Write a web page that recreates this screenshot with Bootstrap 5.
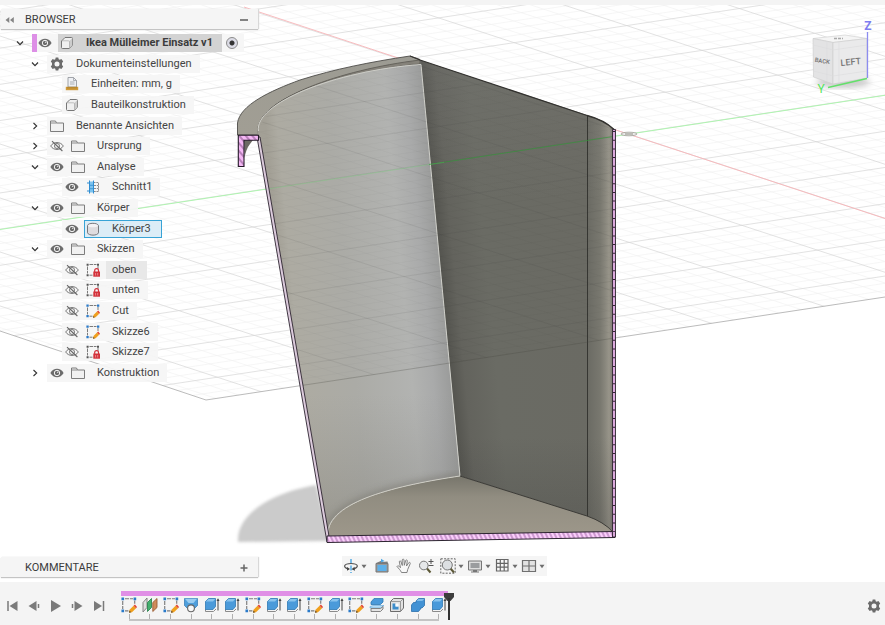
<!DOCTYPE html>
<html lang="de">
<head>
<meta charset="utf-8">
<meta name="viewport" content="width=device-width, initial-scale=1">
<title>Ikea Mülleimer Einsatz v1</title>
<link href="https://cdn.jsdelivr.net/npm/bootstrap@5.3.0/dist/css/bootstrap.min.css" rel="stylesheet">
<style>
  body { font-family: Roboto, "Noto Sans", sans-serif; font-size: 11px; line-height: 16px; color: #444; background: #fff; }
  button { border: 0; padding: 0; background: none; color: #6b6b6b; line-height: 1; }
  svg { display: block; flex: none; }
  .top-strip { height: 5px; background: #f4f4f4; flex: none; }
  .workspace { display: grid; grid-template: minmax(0, 1fr) / minmax(0, 1fr); min-height: 0; }
  .workspace > * { grid-area: 1 / 1; }
  .overlay { padding: 4px 1px 5px; z-index: 1; pointer-events: none; }
  .overlay > * { pointer-events: auto; }
  .dock { width: 257px; height: 20px; background: #f5f5f5; box-shadow: 0 1px 1px #c4c4c4, 1px 0 1px #ddd; padding: 1px 8px 0 3px; }
  .dock h2 { font-size: 11px; line-height: 16px; font-weight: 400; margin: 0; flex: 1; padding-left: 9px; color: #3c3c3c; }
  .i10 { width: 12px; height: 12px; }
  .i14 { width: 14px; height: 14px; }
  .i16 { width: 16px; height: 16px; }
  .caret { width: 8px; height: 16px; }

  .tree { height: 350px; width: 257px; margin: 4px 0 0; padding: 0; list-style: none; display: grid; grid-auto-rows: 1fr; }
  .tree li { display: flex; align-items: center; }
  .lvl0 { padding-left: 11px; }
  .lvl1 { padding-left: 26px; }
  .lvl2 { padding-left: 61px; }
  .twist { width: 16px; margin-right: 4px; display: flex; justify-content: center; color: #333; }
  .chip { display: flex; align-items: center; height: 18px; padding: 0 8px 0 3px; background: rgba(245, 245, 245, .93); white-space: nowrap; }
  .chip > svg { color: #6b6b6b; }
  .chip .name { padding-left: 12px; }
  .chip button + svg { margin-left: 7px; }
  .root-chip { padding: 0 6px 0 0; border-left: 5px solid #dd8fe6; }
  .root-chip button { margin: 0 6px 0 1px; }
  .root-name { display: flex; align-items: center; height: 18px; padding: 0 9px 0 2px; background: #d3d3d3; font-weight: 700; color: #3c3c3c; }
  .root-chip input { appearance: none; width: 12px; height: 12px; margin: 0 0 0 4px; border: 1px solid #8b8b8b; border-radius: 50%; background: radial-gradient(circle, #333 0 2px, #dcdce6 3px); }
  .picked { display: flex; align-items: center; height: 18px; margin: 0 -8px 0 5px; padding: 0 10px 0 1px; background: #dcedf7; border: 1px solid #38a3d6; }
  .chip .hovered { background: #e8e8e8; margin: 0 -8px 0 6px; padding: 1px 11px 1px 6px; }

  .foot { display: grid; grid-template-columns: 1fr auto 1fr; align-items: end; }
  .viewbar { background: #f5f5f5; height: 20px; gap: 6px; padding: 0 1px; margin: 0 0 1px 4px; }
  .viewbar .tight { gap: 2px; }
  .viewbar .split { display: flex; gap: 1px; }

  .timeline { background: #f4f4f4; height: 43px; padding: 0 4px; flex: none; }
  .transport { gap: 6px; padding-top: 5px; }
  .track { width: 330px; margin-left: 11px; padding-top: 9px; position: relative; }
  .group-bar { height: 5px; margin: 0 1px 0 2px; background: #e08fe6; }
  .steps { display: grid; grid-template-columns: repeat(16, 1fr); }
  .steps button { display: flex; flex-direction: column; align-items: center; padding-top: 1px; }
  .steps button::after { content: ""; width: 1px; height: 5px; margin-top: 1px; background: #b0b0b0; }
  .axis { height: 2px; margin: 0 10px; background: #c4c4c4; }
  .playhead { position: absolute; right: -6px; top: 10px; width: 12px; height: 28px; }
  .settings { padding-top: 5px; }

  #minor { stroke: var(--minor, #f0f0f0); }
  #major { stroke: var(--major, #d6d6d6); }
  .through { --minor: rgba(60, 60, 60, .035); --major: rgba(50, 50, 50, .13); }
</style>
</head>
<body class="d-flex flex-column vh-100 overflow-hidden">

<svg width="0" height="0" class="position-absolute" aria-hidden="true">
  <defs>
    <symbol id="down" viewBox="0 0 12 12"><path d="M3 4.500 6 7.700 9 4.500" fill="none" stroke="currentColor" stroke-width="1.200"/></symbol>
    <symbol id="right" viewBox="0 0 12 12"><path d="M4.500 3 7.700 6 4.500 9" fill="none" stroke="currentColor" stroke-width="1.100"/></symbol>
    <symbol id="eye" viewBox="0 0 14 14"><path d="M.4 7C3.400 1.400 10.600 1.400 13.600 7 10.600 12.600 3.400 12.600 .4 7z" fill="#6c6c6c"/><circle cx="7" cy="7" r="2.700" fill="none" stroke="#f4f4f4" stroke-width="1"/><circle cx="7.700" cy="6.200" r=".8" fill="#ddd"/></symbol>
    <symbol id="eyeoff" viewBox="0 0 14 14"><path d="M.7 7C3.400 2.400 10.600 2.400 13.300 7 10.600 11.600 3.400 11.600 .7 7z" fill="none" stroke="#777"/><circle cx="7" cy="7" r="2.500" fill="none" stroke="#777"/><path d="M2 2.200 12.400 12" stroke="#666" stroke-width="1.100"/></symbol>
    <symbol id="folder" viewBox="0 0 14 14"><path d="M.5 2H5.500L6.500 4H13.500V12.500H.5z" fill="#f1f1f1" stroke="#7d7d7d"/><path d="M1 4H6.500" stroke="#8b8b8b"/></symbol>
    <symbol id="gear" viewBox="0 0 14 14"><path fill="currentColor" fill-rule="evenodd" d="M5.700.5H8.300L8.700 2.300 9.700 2.800 11.400 2 13.200 4.400 12 5.900V8.100L13.200 9.600 11.400 12 9.700 11.200 8.700 11.700 8.300 13.500H5.700L5.300 11.700 4.300 11.200 2.600 12 .8 9.600 2 8.100V5.900L.8 4.400 2.600 2 4.300 2.800 5.300 2.300zM7 4.500A2.500 2.500 0 1 0 7 9.500 2.500 2.500 0 1 0 7 4.500z"/></symbol>
    <symbol id="cube" viewBox="0 0 14 14"><path d="M1.500 5 5 1.500H11.500Q12.500 1.500 12.500 2.500V9L9.300 12.500H2.500Q1.500 12.500 1.500 11.500z" fill="#f0f0f0" stroke="#777" stroke-linejoin="round"/><path d="M9.300 5 12.300 2V9L9.300 12.300z" fill="#ccc"/><path d="M2 4.800H8.500Q9.500 4.800 9.500 5.800V12" fill="none" stroke="#aaa" stroke-width=".7"/></symbol>
    <symbol id="units" viewBox="0 0 14 14"><path d="M3 .5H8.500L11.500 3.500V10H3z" fill="#eef0f4" stroke="#8b8f96" stroke-width=".8"/><path d="M8.500 .5V3.500H11.500M5 5H9.500M5 7H9.500" fill="none" stroke="#9a9ea6" stroke-width=".8"/><path d="M.8 9.800H13.200V13.200H.8z" fill="#cf9a3b"/><path d="M3 10V11.500M5 10V11.500M7 10V11.500M9 10V11.500M11 10V11.500" stroke="#8a6218" stroke-width=".6"/></symbol>
    <symbol id="section" viewBox="0 0 14 14"><path d="M7.500 2.500H12.500V11.500H7.500M8 5.500H12.500M8 8.500H12.500" fill="none" stroke="#8d8d8d" stroke-dasharray="2 .8"/><path d="M3.500 1.500H7.500V12.500H3.500z" fill="#7cc3ef"/><path d="M1 3H3.500M1 11H3.500M3.500 .5V13.500M7.500 .5V13.500" stroke="#2f8dd2"/><path d="M4 5.300H7M4 8.700H7" stroke="#2f8dd2" stroke-width=".8"/></symbol>
    <symbol id="body" viewBox="0 0 14 14"><path d="M1.500 3.500C2 .6 11.500.6 12.500 3.500V10.800C11.500 13.900 2.500 13.900 1.500 10.800z" fill="#dedcdf" stroke="#77777c"/><path d="M2 3.700C3 5.800 11 5.800 12 3.700 11 1.300 3 1.300 2 3.700z" fill="#f4f2f4"/></symbol>
    <symbol id="frame" viewBox="0 0 14 14"><path d="M3.500 1.500H10.500M12 3V6M1.500 3.500V10.500M3.500 12.200H6.500" fill="none" stroke="#7b7b7b" stroke-dasharray="3.500 .8"/></symbol>
    <symbol id="sklock" viewBox="0 0 14 14"><use href="#frame"/><path d="M.6.700H2.600V2.700H.6zM11 .7H13V2.700H11zM.6 11.200H2.600V13.200H.6z" fill="#555"/><path d="M8.700 9V7.500A1.900 1.900 0 0 1 12.500 7.500V9" fill="none" stroke="#d3323b" stroke-width="1.200"/><path d="M7.300 8.500H14V13.700H7.300z" fill="#d3323b"/><path d="M9.600 10V12.500M11.700 10V12.500" stroke="#f1a8ab" stroke-width=".7"/></symbol>
    <symbol id="skedit" viewBox="0 0 14 14"><use href="#frame"/><path d="M.4.500H2.700V2.800H.4zM11 .5H13.300V2.800H11zM.4 11H2.700V13.300H.4z" fill="#2a7ac9"/><path d="M7 13.700 7.500 11.100 11 7.600 13.200 9.800 9.600 13.300z" fill="#f0a01e"/><path d="M11 7.600 12.200 6.500 14 8.700 13.200 9.800z" fill="#e2422f"/><path d="M7 13.700 7.400 11.900 8.900 13.300z" fill="#5d4a2e"/></symbol>
    <symbol id="planes" viewBox="0 0 16 16"><path d="M1 5.500 5 1V10.500L1 15z" fill="#e0e0e0" stroke="#7c7c7c" stroke-width=".9"/><path d="M5.500 5.500 9.500 1.500V10.500L5.500 14.500z" fill="#45b06f" stroke="#2f8552" stroke-width=".9"/><path d="M10.800 5.500 15 1.500V10.500L10.800 14.500z" fill="#cf8b5b" stroke="#9b5f35" stroke-width=".9"/></symbol>
    <symbol id="loft" viewBox="0 0 16 16"><path d="M1.500 1.500 14.500 1.500V8.500L11 12H5L1.500 8.500z" fill="#4f9fdc" stroke="#2e77b3" stroke-width=".7"/><path d="M2 1.800 5.500 6H10.500L14 1.800z" fill="#9bcdf1"/><circle cx="8" cy="11.300" r="3.400" fill="#f8f8f8" stroke="#666" stroke-width="1.100"/></symbol>
    <symbol id="extrude" viewBox="0 0 16 16"><path d="M1.500 12V14.500H9.500L12 12" fill="none" stroke="#8b8b8b"/><path d="M1.500 4.500 4.500 1.500H11.500V9.500L9 12.500H1.500z" fill="#4a9ada" stroke="#2f78b4" stroke-width=".8"/><path d="M1.800 4.500 4.500 1.900H11.200L9 4.500z" fill="#8ac4ee"/><path d="M14 2.500V13.500" stroke="#444"/><path d="M12.500 4 14 1.200 15.500 4z" fill="#444"/></symbol>
    <symbol id="splitb" viewBox="0 0 16 16"><path d="M2 5 5 1.500H14V5L11.500 7.500H2z" fill="#4a9ada" stroke="#2f78b4" stroke-width=".8"/><path d="M1 9.500 4 8.500H15L12 11H1z" fill="#b7ddf6" stroke="#5fa5d8" stroke-width=".6"/><path d="M2 11.500H11.500L14 9.500V12L11.500 14.500H2z" fill="#e4e4e4" stroke="#777" stroke-width=".9"/></symbol>
    <symbol id="shell" viewBox="0 0 16 16"><path d="M1.500 4.500 4.500 1.500H14.500V11L11.500 14.500H1.500z" fill="#e2e2e2" stroke="#6c6c6c"/><path d="M1.500 4.500H11.500V14.500M11.500 4.500 14.500 1.500" fill="none" stroke="#888" stroke-width=".8"/><path d="M3.500 6.500H6.500V9.500H9.500V12.500H3.500z" fill="#3d8dcb"/><path d="M6.500 6.500H9.500V9.500H6.500z" fill="#f6fbff"/></symbol>
    <symbol id="combine" viewBox="0 0 16 16"><path d="M1.500 8 3.500 5.500H6V4L8.500 1.500H14.500V8.500L12 11H10.500V12L8.500 14.500H1.500z" fill="#4292d4" stroke="#2b70ab" stroke-width=".8"/><path d="M6.300 4 8.500 1.900H14.200L12.300 4z" fill="#7fbdea"/></symbol>
    <symbol id="caret" viewBox="0 0 8 16"><path d="M1.500 6.800H6.500L4 10.300z" fill="#6e6e6e"/></symbol>
  </defs>
</svg>

<div class="top-strip"></div>

<main class="workspace flex-grow-1">
  <svg class="w-100 h-100" viewBox="0 5 885 577" preserveAspectRatio="xMidYMid slice" role="img" aria-label="Schnittansicht des Mülleimer-Einsatzes">
    <defs>
      <linearGradient id="inner" gradientUnits="userSpaceOnUse" x1="282" y1="300" x2="444" y2="285">
        <stop offset="0" stop-color="#a3a096"/><stop offset=".07" stop-color="#adaba2"/><stop offset=".4" stop-color="#ababa6"/><stop offset=".75" stop-color="#b2b3b1"/><stop offset=".88" stop-color="#a9aaaa"/><stop offset="1" stop-color="#999a99"/>
      </linearGradient>
      <linearGradient id="innerShade" x1="0" y1="0" x2="0" y2="1"><stop offset=".7" stop-color="#777" stop-opacity="0"/><stop offset="1" stop-color="#6b6960" stop-opacity=".3"/></linearGradient>
      <linearGradient id="back" gradientUnits="userSpaceOnUse" x1="436" y1="300" x2="613" y2="283">
        <stop offset="0" stop-color="#4c4c47"/><stop offset=".12" stop-color="#63635d"/><stop offset=".3" stop-color="#6a6b64"/><stop offset=".84" stop-color="#6a6a63"/>
      </linearGradient>
      <linearGradient id="bend" gradientUnits="userSpaceOnUse" x1="587" y1="0" x2="613" y2="0">
        <stop offset="0" stop-color="#7c7b72" stop-opacity="0"/><stop offset=".5" stop-color="#7c7b72" stop-opacity=".8"/><stop offset=".85" stop-color="#98958a"/><stop offset="1" stop-color="#7d7a72"/>
      </linearGradient>
      <linearGradient id="backShade" x1="0" y1="0" x2="0" y2="1"><stop offset="0" stop-color="#888" stop-opacity=".16"/><stop offset=".3" stop-color="#888" stop-opacity="0"/><stop offset=".8" stop-color="#333" stop-opacity="0"/><stop offset="1" stop-color="#333" stop-opacity=".22"/></linearGradient>
      <linearGradient id="floor" x1="0" y1="0" x2="0" y2="1"><stop offset="0" stop-color="#77756b"/><stop offset=".35" stop-color="#918d81"/><stop offset="1" stop-color="#9d978a"/></linearGradient>
      <linearGradient id="rim" x1="0" y1="1" x2="1" y2="0"><stop offset="0" stop-color="#a19e94"/><stop offset="1" stop-color="#9c9b93"/></linearGradient>
      <pattern id="hatch" width="4" height="4" patternUnits="userSpaceOnUse" patternTransform="rotate(-25)"><path d="M0 0H4V4H0z" fill="#fbcffb"/><path d="M1 0V4" stroke="#b57cba" stroke-width="1.300"/></pattern>
      <pattern id="hatchHook" width="5" height="5" patternUnits="userSpaceOnUse" patternTransform="rotate(-40)"><path d="M0 0H5V5H0z" fill="#f5b8f5"/><path d="M1 0V5" stroke="#7d4a82" stroke-width="1"/></pattern>
      <filter id="soft"><feGaussianBlur stdDeviation="1.500"/></filter>
      <filter id="soft4"><feGaussianBlur stdDeviation="3"/></filter>
      <clipPath id="plane"><path d="M0 331 206 400 885 297V5H0z"/></clipPath>
      <clipPath id="solid"><path d="M258 135C256 108 330 70 420 60L587 115Q604 120 614 129V538L327 542z"/></clipPath>
      <clipPath id="innerClip"><path d="M258 136C249 105 330 71 421 64L460 476C400 485 326 501 328 536z"/></clipPath>
      <g id="ground" clip-path="url(#plane)" fill="none">
        <g transform="matrix(11.260 -1.706 7.550 2.476 628 134)">
          <path id="minor" stroke-width=".6" vector-effect="non-scaling-stroke"/>
          <path id="major" stroke-width=".7" vector-effect="non-scaling-stroke"/>
        </g>
      </g>
    </defs>

    <!-- ground plane -->
    <use href="#ground"/>
    <path d="M0 331 206 400 885 297" fill="none" stroke="#a9a9a9" stroke-width=".8"/>
    <path d="M0 229.500 885 95.300" stroke="#a8f5a9" stroke-width=".9"/>
    <path d="M244 7 628 134 885 218.500" fill="none" stroke="#f8b4b8" stroke-width=".9"/>
    <ellipse cx="629" cy="134" rx="8" ry="1.800" fill="#eee" stroke="#9c9c92" stroke-width=".8"/>
    <path d="M625 134H633" stroke="#8b8b80"/>

    <!-- cast shadow -->
    <path d="M238 542C236 515 270 493 316 485L330 541z" fill="#cbcbcb" filter="url(#soft)"/>

    <!-- rim -->
    <path d="M237.500 135V123C240 105 270 91 300 80 335 69 370 62 410 56L420 59.500V64C340 71 250 100 258.500 135z" fill="url(#rim)" stroke="#4d4c48" stroke-width=".9"/>
    <path d="M258 128C262 99 338 70 420 60V64C345 71 252 100 258.500 135z" fill="#85827a" stroke="#5a5852" stroke-width=".8"/>

    <!-- back wall -->
    <path d="M420 60 587 115Q604 120 614 129V531L587 517 460 476z" fill="url(#back)"/>
    <path d="M587 115Q604 120 614 129V531L587 517z" fill="url(#bend)"/>
    <path d="M420 60 587 115Q604 120 614 129V531L587 517 460 476z" fill="url(#backShade)"/>
    <path d="M587.500 116V517" stroke="#30302d" stroke-width=".9"/>
    <path d="M410 56 420 60 587 115.500Q604 120 614 129.500" fill="none" stroke="#33322f" stroke-width="1.300"/>

    <!-- inner wall -->
    <path d="M258 136C249 105 330 71 421 64L460 476C400 485 326 501 328 536z" fill="url(#inner)"/>
    <path d="M258 136C249 105 330 71 421 64L460 476C400 485 326 501 328 536z" fill="url(#innerShade)"/>
    <path d="M460 476C400 485 326 501 328 536" fill="none" stroke="#77756d" stroke-width="7" opacity=".5" filter="url(#soft4)" clip-path="url(#innerClip)"/>
    <path d="M258.500 131C254 104 333 71 421 64.500L460 476" fill="none" stroke="#cfcfc9" stroke-width="1"/>

    <!-- floor -->
    <path d="M328 536C326 501 400 485 460 476L587 516Q604 522 613 532z" fill="url(#floor)"/>
    <path d="M460 476 587 516Q604 522 613 532" fill="none" stroke="#3c3b37" stroke-width="1"/>
    <path d="M328 535C326 501 400 485 460 476" fill="none" stroke="#cfcec6" stroke-width="1"/>

    <!-- grid seen through the body -->
    <g clip-path="url(#solid)">
      <use href="#ground" class="through"/>
      <path d="M206 400 885 297" stroke="#44443f" stroke-opacity=".35" stroke-width=".8"/>
      <path d="M0 229.500 444 162.300" stroke="#7fd584" stroke-opacity=".45" stroke-width=".9"/>
      <path d="M429 164.500 885 95.300" stroke="#2f9e35" stroke-opacity=".6" stroke-width="1"/>
    </g>

    <!-- cut faces -->
    <path d="M257 137 327 542H329.500L328.500 533 260 137z" fill="#dccbdc" stroke="#2c2430" stroke-width=".9"/>
    <path d="M327 536 615 531.500V537.500L327 542.500z" fill="url(#hatch)" stroke="#2c2430" stroke-width="1"/>
    <path d="M612.500 129.500H615.500V537H612.500z" fill="#dba9dc" stroke="#2c2430" stroke-width=".9"/>
    <path d="M614 131V532" stroke="#30202f" stroke-width="2" stroke-dasharray="1 7.700"/>
    <path d="M244 140H253L250 144Q246 149 244.500 158z" fill="#6c6a63"/>
    <path d="M238.300 135.300H258.500V140.300H244V166.500H238.300z" fill="url(#hatchHook)" stroke="#251a29" stroke-width="1.100"/>

    <!-- view cube -->
    <ellipse cx="843" cy="82" rx="27" ry="6" fill="#c9c9c9" filter="url(#soft4)"/>
    <path d="M813 38.500 845 35 867 38.500 833 42.500z" fill="#f5f5f5" stroke="#d3d3d3" stroke-width=".7"/>
    <path d="M813 38.500 833 42.500V84L813.500 77z" fill="#e3e3e4" stroke="#d0d0d0" stroke-width=".7"/>
    <path d="M833 42.500 867 38.500V78L833 84z" fill="#eaeaeb" stroke="#d0d0d0" stroke-width=".7"/>
    <path d="M827 41V81M839 42V83M813 45 833 50 867 45M813 71 833 76 867 71" fill="none" stroke="#dcdcdd" stroke-width=".6"/>
    <path d="M834 38.500H843" stroke="#a9a9a9" stroke-width="1.500" stroke-dasharray="3 1"/>
    <path d="M867.500 32V78" stroke="#8c8cf0" stroke-width="1.300"/>
    <path d="M867 78.500 828 87.500" stroke="#63e06a" stroke-width="1.500"/>
    <g font-family="Roboto, sans-serif" text-anchor="middle">
      <text x="868" y="30" font-size="12" font-weight="700" fill="#7d7df0">Z</text>
      <text x="821" y="93" font-size="12" fill="#55e55c">Y</text>
      <text transform="translate(851 65) rotate(-5)" font-size="9" font-weight="500" fill="#777">LEFT</text>
      <text transform="translate(822 63) rotate(9)" font-size="6" font-weight="500" fill="#777">BACK</text>
    </g>
  </svg>

  <div class="overlay d-flex flex-column align-items-stretch">
    <section class="dock d-flex align-items-center">
      <button aria-label="Browser einklappen"><svg class="i10" viewBox="0 0 12 12"><path d="M5.300 3V9L1.500 6zM9.800 3V9L6 6z" fill="#858585"/></svg></button>
      <h2>BROWSER</h2>
      <button aria-label="Minimieren"><svg class="i10" viewBox="0 0 12 12"><path d="M2 6H10" stroke="#666" stroke-width="1.600"/></svg></button>
    </section>

    <ul class="tree">
      <li class="lvl0"><button class="twist m-0" aria-label="Zuklappen"><svg class="i10"><use href="#down"/></svg></button>
        <div class="chip root-chip ms-1"><button aria-label="Sichtbarkeit"><svg class="i14"><use href="#eye"/></svg></button><label for="active" class="root-name"><svg class="i14"><use href="#cube"/></svg><span class="name">Ikea Mülleimer Einsatz v1</span></label><input type="radio" id="active" checked></div></li>
      <li class="lvl1"><button class="twist" aria-label="Zuklappen"><svg class="i10"><use href="#down"/></svg></button>
        <div class="chip"><svg class="i14"><use href="#gear"/></svg><span class="name">Dokumenteinstellungen</span></div></li>
      <li class="lvl2"><div class="chip"><svg class="i14"><use href="#units"/></svg><span class="name">Einheiten: mm, g</span></div></li>
      <li class="lvl2"><div class="chip"><svg class="i14"><use href="#cube"/></svg><span class="name">Bauteilkonstruktion</span></div></li>
      <li class="lvl1"><button class="twist" aria-label="Aufklappen"><svg class="i10"><use href="#right"/></svg></button>
        <div class="chip"><svg class="i14"><use href="#folder"/></svg><span class="name">Benannte Ansichten</span></div></li>
      <li class="lvl1"><button class="twist" aria-label="Aufklappen"><svg class="i10"><use href="#right"/></svg></button>
        <div class="chip"><button aria-label="Sichtbarkeit"><svg class="i14"><use href="#eyeoff"/></svg></button><svg class="i14"><use href="#folder"/></svg><span class="name">Ursprung</span></div></li>
      <li class="lvl1"><button class="twist" aria-label="Zuklappen"><svg class="i10"><use href="#down"/></svg></button>
        <div class="chip"><button aria-label="Sichtbarkeit"><svg class="i14"><use href="#eye"/></svg></button><svg class="i14"><use href="#folder"/></svg><span class="name">Analyse</span></div></li>
      <li class="lvl2"><div class="chip"><button aria-label="Sichtbarkeit"><svg class="i14"><use href="#eye"/></svg></button><svg class="i14"><use href="#section"/></svg><span class="name">Schnitt1</span></div></li>
      <li class="lvl1"><button class="twist" aria-label="Zuklappen"><svg class="i10"><use href="#down"/></svg></button>
        <div class="chip"><button aria-label="Sichtbarkeit"><svg class="i14"><use href="#eye"/></svg></button><svg class="i14"><use href="#folder"/></svg><span class="name">Körper</span></div></li>
      <li class="lvl2"><div class="chip"><button aria-label="Sichtbarkeit"><svg class="i14"><use href="#eye"/></svg></button><div class="picked"><svg class="i14"><use href="#body"/></svg><span class="name">Körper3</span></div></div></li>
      <li class="lvl1"><button class="twist" aria-label="Zuklappen"><svg class="i10"><use href="#down"/></svg></button>
        <div class="chip"><button aria-label="Sichtbarkeit"><svg class="i14"><use href="#eye"/></svg></button><svg class="i14"><use href="#folder"/></svg><span class="name">Skizzen</span></div></li>
      <li class="lvl2"><div class="chip"><button aria-label="Sichtbarkeit"><svg class="i14"><use href="#eyeoff"/></svg></button><svg class="i14"><use href="#sklock"/></svg><span class="name hovered">oben</span></div></li>
      <li class="lvl2"><div class="chip"><button aria-label="Sichtbarkeit"><svg class="i14"><use href="#eyeoff"/></svg></button><svg class="i14"><use href="#sklock"/></svg><span class="name">unten</span></div></li>
      <li class="lvl2"><div class="chip"><button aria-label="Sichtbarkeit"><svg class="i14"><use href="#eyeoff"/></svg></button><svg class="i14"><use href="#skedit"/></svg><span class="name">Cut</span></div></li>
      <li class="lvl2"><div class="chip"><button aria-label="Sichtbarkeit"><svg class="i14"><use href="#eyeoff"/></svg></button><svg class="i14"><use href="#skedit"/></svg><span class="name">Skizze6</span></div></li>
      <li class="lvl2"><div class="chip"><button aria-label="Sichtbarkeit"><svg class="i14"><use href="#eyeoff"/></svg></button><svg class="i14"><use href="#sklock"/></svg><span class="name">Skizze7</span></div></li>
      <li class="lvl1"><button class="twist" aria-label="Aufklappen"><svg class="i10"><use href="#right"/></svg></button>
        <div class="chip"><button aria-label="Sichtbarkeit"><svg class="i14"><use href="#eye"/></svg></button><svg class="i14"><use href="#folder"/></svg><span class="name">Konstruktion</span></div></li>
    </ul>

    <div class="foot mt-auto">
      <section class="dock d-flex align-items-center">
        <span class="i10"></span>
        <h2>KOMMENTARE</h2>
        <button aria-label="Kommentare öffnen"><svg class="i10" viewBox="0 0 12 12"><path d="M2.500 6H9.500M6 2.500V9.500" stroke="#666" stroke-width="1.500"/></svg></button>
      </section>
      <div class="viewbar d-flex align-items-center" role="toolbar" aria-label="Ansicht">
        <div class="split"><button aria-label="Orbit"><svg class="i16" viewBox="0 0 16 16"><path d="M8 1V15" stroke="#49a5e3" stroke-width="1.400" stroke-dasharray="5 1.500"/><path d="M5.500 11C-.5 9.500.5 5.500 8 5.500S16.500 9.500 10 11" fill="none" stroke="#555" stroke-width="1.200"/><path d="M11.500 8.800 8.500 11.200 12 12.800zM4 9 7 11 4 12.800z" fill="#444"/></svg></button><button aria-label="Orbit-Optionen"><svg class="caret"><use href="#caret"/></svg></button></div>
        <button aria-label="Ansehen"><svg class="i16" viewBox="0 0 16 16"><path d="M2 5.500H14V14H2z" fill="#9a9a9a" stroke="#777"/><path d="M3.500 7H12.500V13H3.500z" fill="#5db0e9"/><path d="M2 5 8 2.500V4L13.500 3.500 14 5.500H2z" fill="#7d7d7d"/><path d="M7 2V.8L10.500 3 7 4.500z" fill="#4ba7e6"/></svg></button>
        <button aria-label="Pan"><svg class="i16" viewBox="0 0 16 16"><path d="M5.500 14.500C4.500 12 2.500 10.500 1 8.500 1.500 7.300 3 7.800 4.500 9.700L3.300 3.800C3.400 2.500 4.700 2.500 5 3.800L6.300 7.500 6.200 2C6.500.800 7.800.800 8 2L8.300 7.300 9.700 2.500C10.200 1.400 11.400 1.800 11.300 3L10.500 8 12.800 4.700C13.600 3.900 14.600 4.600 14.200 5.700L11.700 11.500 11 14.500z" fill="#f8f8f8" stroke="#777" stroke-width=".9"/></svg></button>
        <button aria-label="Zoom"><svg class="i16" viewBox="0 0 16 16"><path d="M9 10.500 12.500 14.500" stroke="#5c5836" stroke-width="2"/><circle cx="5.800" cy="7.500" r="4.300" fill="#e6e8ea" stroke="#777"/><path d="M13 1V6M10.500 3.500H15.500M10.500 7.500H15.500" stroke="#555"/></svg></button>
        <div class="tight d-flex">
          <div class="split"><button aria-label="Zoomfenster"><svg class="i16" viewBox="0 0 16 16"><path d="M.8.800H15.200V15.200H.8z" fill="none" stroke="#666" stroke-dasharray="2 1.300"/><path d="M10.500 10.500 14 14.500" stroke="#5c5836" stroke-width="2"/><circle cx="7.300" cy="7" r="5" fill="#dcdfe2" stroke="#777"/></svg></button><button aria-label="Zoom-Optionen"><svg class="caret"><use href="#caret"/></svg></button></div>
          <div class="split"><button aria-label="Anzeige"><svg class="i16" viewBox="0 0 16 16"><path d="M1.500 3H14.500V12H1.500z" fill="#ddd" stroke="#777"/><path d="M3.500 5H12.500V10H3.500z" fill="#9a9c9e"/><path d="M6 12H10V13.500H12V14.500H4V13.500H6z" fill="#777"/></svg></button><button aria-label="Anzeige-Optionen"><svg class="caret"><use href="#caret"/></svg></button></div>
          <div class="split"><button aria-label="Raster"><svg class="i16" viewBox="0 0 16 16"><path d="M2.500 1.500H14V13H2.500zM6.300 1.500V13M10.200 1.500V13M2.500 5.300H14M2.500 9.200H14" fill="#f8f8f8" stroke="#666" stroke-width="1.200"/></svg></button><button aria-label="Raster-Optionen"><svg class="caret"><use href="#caret"/></svg></button></div>
          <div class="split"><button aria-label="Ansichtsfenster"><svg class="i16" viewBox="0 0 16 16"><path d="M1.500 2.500H14.500V13.500H1.500zM8 2.500V13.500M1.500 8H14.500" fill="#e2e2e2" stroke="#707070" stroke-width="1.200"/></svg></button><button aria-label="Fenster-Optionen"><svg class="caret"><use href="#caret"/></svg></button></div>
        </div>
      </div>
    </div>
  </div>
</main>

<footer class="timeline d-flex align-items-center">
  <div class="transport d-flex">
    <button aria-label="Zum Anfang"><svg class="i16" viewBox="0 0 16 16"><path d="M4 3V13" stroke="#7a7a7a" stroke-width="1.500"/><path d="M13.500 3V13L5.500 8z" fill="#7a7a7a"/></svg></button>
    <button aria-label="Schritt zurück"><svg class="i16" viewBox="0 0 16 16"><path d="M10.500 3V13L2.500 8z" fill="#7a7a7a"/><path d="M12.500 6V10" stroke="#7a7a7a" stroke-width="1.500"/></svg></button>
    <button aria-label="Abspielen"><svg class="i16" viewBox="0 0 16 16"><path d="M3 2V14L13 8z" fill="#7a7a7a"/></svg></button>
    <button aria-label="Schritt vor"><svg class="i16" viewBox="0 0 16 16"><path d="M4.500 3V13L12.500 8z" fill="#7a7a7a"/><path d="M2.500 6V10" stroke="#7a7a7a" stroke-width="1.500"/></svg></button>
    <button aria-label="Zum Ende"><svg class="i16" viewBox="0 0 16 16"><path d="M2 3V13L10 8z" fill="#7a7a7a"/><path d="M11.500 3V13" stroke="#7a7a7a" stroke-width="1.500"/></svg></button>
  </div>
  <div class="track align-self-start">
    <div class="group-bar"></div>
    <div class="steps">
      <button aria-label="Skizze"><svg class="i16"><use href="#skedit"/></svg></button>
      <button aria-label="Ebene"><svg class="i16"><use href="#planes"/></svg></button>
      <button aria-label="Skizze"><svg class="i16"><use href="#skedit"/></svg></button>
      <button aria-label="Erhebung"><svg class="i16"><use href="#loft"/></svg></button>
      <button aria-label="Extrusion"><svg class="i16"><use href="#extrude"/></svg></button>
      <button aria-label="Extrusion"><svg class="i16"><use href="#extrude"/></svg></button>
      <button aria-label="Skizze"><svg class="i16"><use href="#skedit"/></svg></button>
      <button aria-label="Extrusion"><svg class="i16"><use href="#extrude"/></svg></button>
      <button aria-label="Extrusion"><svg class="i16"><use href="#extrude"/></svg></button>
      <button aria-label="Skizze"><svg class="i16"><use href="#skedit"/></svg></button>
      <button aria-label="Extrusion"><svg class="i16"><use href="#extrude"/></svg></button>
      <button aria-label="Skizze"><svg class="i16"><use href="#skedit"/></svg></button>
      <button aria-label="Teilen"><svg class="i16"><use href="#splitb"/></svg></button>
      <button aria-label="Schale"><svg class="i16"><use href="#shell"/></svg></button>
      <button aria-label="Kombinieren"><svg class="i16"><use href="#combine"/></svg></button>
      <button aria-label="Extrusion"><svg class="i16"><use href="#extrude"/></svg></button>
    </div>
    <div class="axis"></div>
    <svg class="playhead" viewBox="0 0 12 28"><path d="M1 1H11V5L7.500 9H4.500L1 5z" fill="#3d3d3d"/><path d="M6 6V28" stroke="#333" stroke-width="2"/></svg>
  </div>
  <button class="settings ms-auto" aria-label="Einstellungen"><svg class="i14"><use href="#gear"/></svg></button>
</footer>

<script src="https://cdn.jsdelivr.net/npm/bootstrap@5.3.0/dist/js/bootstrap.bundle.min.js"></script>
<script>
  // Ground grid in cell units: a minor line every two units, a major line every ten.
  let minor = '', major = '';
  for (let i = -120; i <= 120; i += 2) {
    const line = `M${i} -120V120M-120 ${i}H120`;
    if (i % 10) minor += line; else major += line;
  }
  document.getElementById('minor').setAttribute('d', minor);
  document.getElementById('major').setAttribute('d', major);
</script>
</body>
</html>
